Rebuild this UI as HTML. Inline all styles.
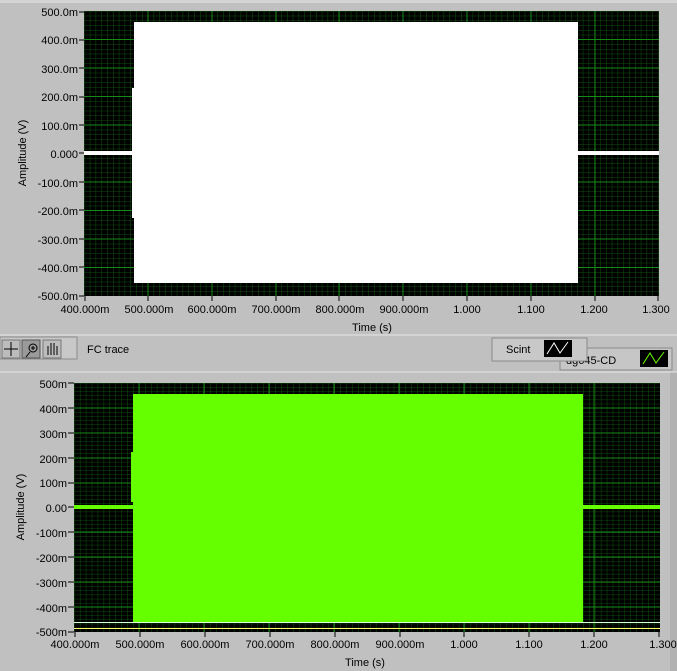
<!DOCTYPE html>
<html><head><meta charset="utf-8"><style>
html,body{margin:0;padding:0;background:#c0c0c0;overflow:hidden;}
svg{display:block;}
svg text{font-family:"Liberation Sans",sans-serif;font-size:11px;fill:#000;}
</style></head><body>
<svg width="677" height="671" viewBox="0 0 677 671" xmlns="http://www.w3.org/2000/svg">
<defs>
<pattern id="g1" x="84" y="11" width="5.8" height="4.75" patternUnits="userSpaceOnUse">
<rect width="5.8" height="4.75" fill="#000"/>
<path d="M0 0V4.75M0 0H5.8" stroke="#0f500f" stroke-width="1" fill="none"/>
</pattern>
<pattern id="g2" x="74" y="383" width="5.92" height="4.15" patternUnits="userSpaceOnUse">
<rect width="5.92" height="4.15" fill="#000"/>
<path d="M0 0V4.15M0 0H5.92" stroke="#0f500f" stroke-width="1" fill="none"/>
</pattern>
</defs>
<rect x="0" y="0" width="677" height="3" fill="#d4d4d4"/>
<rect x="670" y="372" width="7" height="299" fill="#b2b2b2"/>
<!-- TOP PLOT -->
<rect x="84" y="11" width="575" height="285" fill="url(#g1)"/>
<g stroke="#168a16" stroke-width="1">
<path d="M148 11V296M212 11V296M276 11V296M339 11V296M403 11V296M467 11V296M531 11V296M595 11V296"/>
<path d="M84 39.5H659M84 68H659M84 96.5H659M84 125H659M84 182H659M84 210.5H659M84 239H659M84 267.5H659"/>
</g>
<rect x="84" y="151" width="575" height="4" fill="#fff"/>
<rect x="134" y="22" width="444" height="261" fill="#fff"/>
<rect x="132" y="88" width="3" height="130" fill="#fff"/>
<g text-anchor="end">
<text x="78" y="16">500.0m</text><text x="78" y="44">400.0m</text><text x="78" y="73">300.0m</text><text x="78" y="101">200.0m</text><text x="78" y="130">100.0m</text><text x="78" y="158">0.000</text><text x="78" y="187">-100.0m</text><text x="78" y="215">-200.0m</text><text x="78" y="244">-300.0m</text><text x="78" y="272">-400.0m</text><text x="78" y="300">-500.0m</text>
</g>
<g stroke="#000"><path d="M79 12H84M79 40H84M79 68H84M79 97H84M79 125H84M79 153H84M79 182H84M79 210H84M79 239H84M79 267H84M79 296H84"/>
<path d="M85 296V301M148 296V301M212 296V301M276 296V301M339 296V301M403 296V301M467 296V301M531 296V301M595 296V301M658 296V301"/></g>
<g text-anchor="middle">
<text x="85" y="313">400.000m</text><text x="149" y="313">500.000m</text><text x="212" y="313">600.000m</text><text x="276" y="313">700.000m</text><text x="340" y="313">800.000m</text><text x="404" y="313">900.000m</text><text x="467" y="313">1.000</text><text x="531" y="313">1.100</text><text x="594" y="313">1.200</text><text x="656" y="313">1.300</text>
<text x="372" y="331">Time (s)</text>
</g>
<text transform="translate(26,153) rotate(-90)" text-anchor="middle">Amplitude (V)</text>
<!-- toolbar -->
<path d="M0 335H677" stroke="#e6e6e6"/>
<rect x="0" y="337" width="77" height="22" fill="#c8c8c8" stroke="#8c8c8c"/>
<rect x="2" y="340" width="18" height="18" fill="#bcbcbc" stroke="#777"/>
<path d="M11 342V356M4 349H18" stroke="#000"/>
<rect x="22" y="340" width="18" height="18" fill="#9a9a9a" stroke="#555"/>
<circle cx="33" cy="348" r="4" fill="none" stroke="#000"/><path d="M30 352L26 357M31 348H35M33 346V350" stroke="#000"/>
<rect x="43" y="340" width="18" height="18" fill="#bcbcbc" stroke="#777"/>
<path d="M48 355V346M51 355V343M54 355V343M57 355V346" stroke="#000"/>
<text x="87" y="353">FC trace</text>
<path d="M0 372H677" stroke="#e6e6e6"/>
<rect x="560" y="348" width="112" height="22" fill="#c6c6c6" stroke="#8a8a8a"/>
<text x="566" y="364">dg645-CD</text>
<rect x="640" y="350" width="28" height="17" fill="#000"/>
<path d="M643 364L650 353L656 363L664 352" stroke="#66ff00" fill="none"/>
<rect x="492" y="338" width="95" height="23" fill="#c8c8c8" stroke="#8a8a8a"/>
<text x="506" y="353">Scint</text>
<rect x="544" y="340" width="28" height="17" fill="#000"/>
<path d="M547 354L554 343L560 353L568 342" stroke="#fff" fill="none"/>
<!-- BOTTOM PLOT -->
<rect x="74" y="383" width="586" height="249" fill="url(#g2)"/>
<g stroke="#168a16" stroke-width="1">
<path d="M139 383V632M204 383V632M269 383V632M334 383V632M399 383V632M464 383V632M529 383V632M594 383V632"/>
<path d="M74 408H660M74 433H660M74 458H660M74 483H660M74 532H660M74 557H660M74 582H660M74 607H660"/>
</g>
<rect x="74" y="505" width="586" height="4" fill="#66ff00"/>
<rect x="133" y="394" width="450" height="228" fill="#66ff00"/>
<rect x="131" y="452" width="3" height="50" fill="#66ff00"/>
<path d="M74 622.5H660" stroke="#d8ffd8"/>
<path d="M74 628.5H660" stroke="#ffff66"/>
<g text-anchor="end">
<text x="67" y="388">500m</text><text x="67" y="413">400m</text><text x="67" y="438">300m</text><text x="67" y="463">200m</text><text x="67" y="487">100m</text><text x="67" y="512">0.00</text><text x="67" y="537">-100m</text><text x="67" y="562">-200m</text><text x="67" y="587">-300m</text><text x="67" y="612">-400m</text><text x="67" y="636">-500m</text>
</g>
<g stroke="#000"><path d="M68 383H74M68 408H74M68 433H74M68 458H74M68 483H74M68 507H74M68 532H74M68 557H74M68 582H74M68 607H74M68 632H74"/>
<path d="M75 632V637M140 632V637M205 632V637M270 632V637M335 632V637M400 632V637M464 632V637M529 632V637M594 632V637M659 632V637"/></g>
<g text-anchor="middle">
<text x="75" y="648">400.000m</text><text x="140" y="648">500.000m</text><text x="205" y="648">600.000m</text><text x="270" y="648">700.000m</text><text x="335" y="648">800.000m</text><text x="400" y="648">900.000m</text><text x="464" y="648">1.000</text><text x="529" y="648">1.100</text><text x="594" y="648">1.200</text><text x="663" y="648">1.300</text>
<text x="365" y="666">Time (s)</text>
</g>
<text transform="translate(24,507) rotate(-90)" text-anchor="middle">Amplitude (V)</text>
</svg>
</body></html>
